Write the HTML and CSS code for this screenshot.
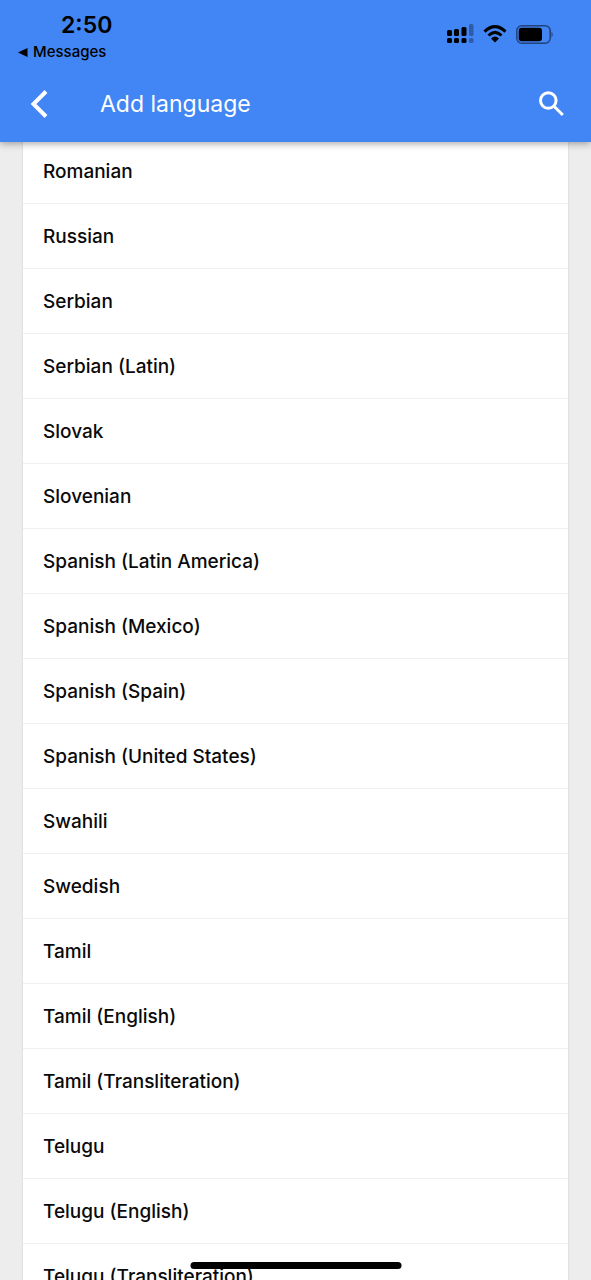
FILE: index.html
```html
<!DOCTYPE html>
<html lang="en">
<head>
<meta charset="utf-8">
<meta name="viewport" content="width=device-width, initial-scale=1">
<title>Add language</title>
<link rel="stylesheet" href="styles.css">
</head>
<body>
<div class="screen">
  <header class="header">
    <div class="status">
      <div class="status-left">
        <time class="clock">2:50</time>
        <a class="return-link" href="#"><svg class="return-arrow" viewBox="0 0 10 9" aria-hidden="true"><path d="M0 4.500 9.500 0V9Z"/></svg>Messages</a>
      </div>
      <div class="status-icons">
        <svg width="27" height="20" viewBox="0 0 27 20" aria-label="Signal">
          <rect x="0" y="6" width="5" height="6" rx="1.500"/><rect x="7" y="5" width="5" height="7" rx="1.500"/><rect x="14.500" y="3" width="5" height="9" rx="1.500"/><rect class="faint" x="22" y="0" width="4.500" height="12" rx="1.500"/>
          <rect x="0" y="14" width="5" height="5" rx="1.500"/><rect x="7" y="14" width="5" height="5" rx="1.500"/><rect x="14.500" y="14" width="5" height="5" rx="1.500"/><rect class="faint" x="22" y="14" width="4.500" height="5" rx="1.500"/>
        </svg>
        <svg width="24" height="18" viewBox="0 0 24 18" aria-label="Wi-Fi">
          <path class="wave" d="M1.500 6.700Q12-3.300 22.500 6.700M5.500 10.500Q12 4.300 18.500 10.500"/>
          <path d="M8 13.400Q12 9.800 16 13.400L12 17.600Z"/>
        </svg>
        <svg width="38" height="19" viewBox="0 0 38 19" aria-label="Battery">
          <rect class="shell" x="0.800" y="0.800" width="33.400" height="17.400" rx="5"/>
          <rect x="2.700" y="2.700" width="23.300" height="13.600" rx="3"/>
          <path class="cap" d="M35.500 6.500Q38 9.500 35.500 12.500Z"/>
        </svg>
      </div>
    </div>
    <div class="toolbar">
      <button class="icon-button" type="button" aria-label="Back"><svg width="18" height="28" viewBox="0 0 18 28"><path class="chevron" d="M16 1.500 3.500 14 16 26.500"/></svg></button>
      <h1 class="title">Add language</h1>
      <button class="icon-button" type="button" aria-label="Search"><svg width="26" height="26" viewBox="0 0 26 26"><circle class="lens" cx="9.300" cy="9.500" r="7.800"/><path class="handle" d="M15 15.200 23.800 24"/></svg></button>
    </div>
  </header>
  <main class="content">
    <ul class="languages">
      <li><button class="language" type="button">Romanian</button></li>
      <li><button class="language" type="button">Russian</button></li>
      <li><button class="language" type="button">Serbian</button></li>
      <li><button class="language" type="button">Serbian (Latin)</button></li>
      <li><button class="language" type="button">Slovak</button></li>
      <li><button class="language" type="button">Slovenian</button></li>
      <li><button class="language" type="button">Spanish (Latin America)</button></li>
      <li><button class="language" type="button">Spanish (Mexico)</button></li>
      <li><button class="language" type="button">Spanish (Spain)</button></li>
      <li><button class="language" type="button">Spanish (United States)</button></li>
      <li><button class="language" type="button">Swahili</button></li>
      <li><button class="language" type="button">Swedish</button></li>
      <li><button class="language" type="button">Tamil</button></li>
      <li><button class="language" type="button">Tamil (English)</button></li>
      <li><button class="language" type="button">Tamil (Transliteration)</button></li>
      <li><button class="language" type="button">Telugu</button></li>
      <li><button class="language" type="button">Telugu (English)</button></li>
      <li><button class="language" type="button">Telugu (Transliteration)</button></li>
    </ul>
  </main>
  <div class="home-indicator"></div>
</div>
</body>
</html>
```
FILE: styles.css
```css
* { box-sizing: border-box; }

body {
  margin: 0;
  background: #ededed;
  color: #0a0a0a;
  font-family: Inter, "Liberation Sans", sans-serif;
}

button {
  border: 0;
  padding: 0;
  background: none;
  color: inherit;
  font: inherit;
}

.screen {
  position: relative;
  display: flex;
  flex-direction: column;
  height: 100vh;
  overflow: hidden;
}

.header {
  position: relative;
  z-index: 1;
  flex: none;
  background: #4285f4;
  box-shadow: 0 1px 8px rgba(0, 0, 0, 0.4);
}

.status {
  display: flex;
  justify-content: space-between;
  height: 66px;
  padding: 10px 37px 0 18px;
  color: #000;
}

.status-left {
  display: flex;
  flex-direction: column;
}

.clock {
  padding-left: 43px;
  font-size: 23px;
  font-weight: 600;
  line-height: 30px;
}

.return-link {
  display: flex;
  align-items: center;
  gap: 5px;
  color: inherit;
  font-size: 15px;
  font-weight: 500;
  line-height: 24px;
  text-decoration: none;
}

.return-arrow {
  width: 10px;
  height: 9px;
}

.status-icons {
  display: flex;
  align-items: center;
  gap: 9px;
  height: 48px;
}

.faint { opacity: 0.3; }

.wave {
  fill: none;
  stroke: #000;
  stroke-width: 3;
}

.shell {
  fill: none;
  stroke: #000;
  stroke-width: 1.500;
  opacity: 0.5;
}

.cap { opacity: 0.5; }

.toolbar {
  display: flex;
  align-items: center;
  height: 76px;
  padding: 0 26px 0 30px;
  color: #fff;
}

.icon-button {
  display: flex;
  flex: none;
}

.chevron,
.lens,
.handle {
  fill: none;
  stroke: #fff;
  stroke-width: 4;
}

.lens,
.handle { stroke-width: 3; }

.title {
  flex: 1;
  margin: 0 0 0 52px;
  font-size: 23px;
  font-weight: 400;
  line-height: 32px;
}

.content {
  flex: 1;
  min-height: 0;
  padding: 0 23px;
  overflow: hidden;
}

.languages {
  margin: -3px 0 0;
  padding: 0;
  list-style: none;
  background: #fff;
  box-shadow: 0 0 2px rgba(0, 0, 0, 0.15);
}

.language {
  display: block;
  width: 100%;
  height: 65px;
  padding: 0 20px;
  border-bottom: 1px solid #efefef;
  font-size: 19px;
  font-weight: 500;
  text-align: left;
}

.home-indicator {
  position: absolute;
  z-index: 2;
  bottom: 11px;
  left: 50%;
  width: 211px;
  height: 7px;
  border-radius: 4px;
  background: #000;
  transform: translateX(-50%);
}
```
